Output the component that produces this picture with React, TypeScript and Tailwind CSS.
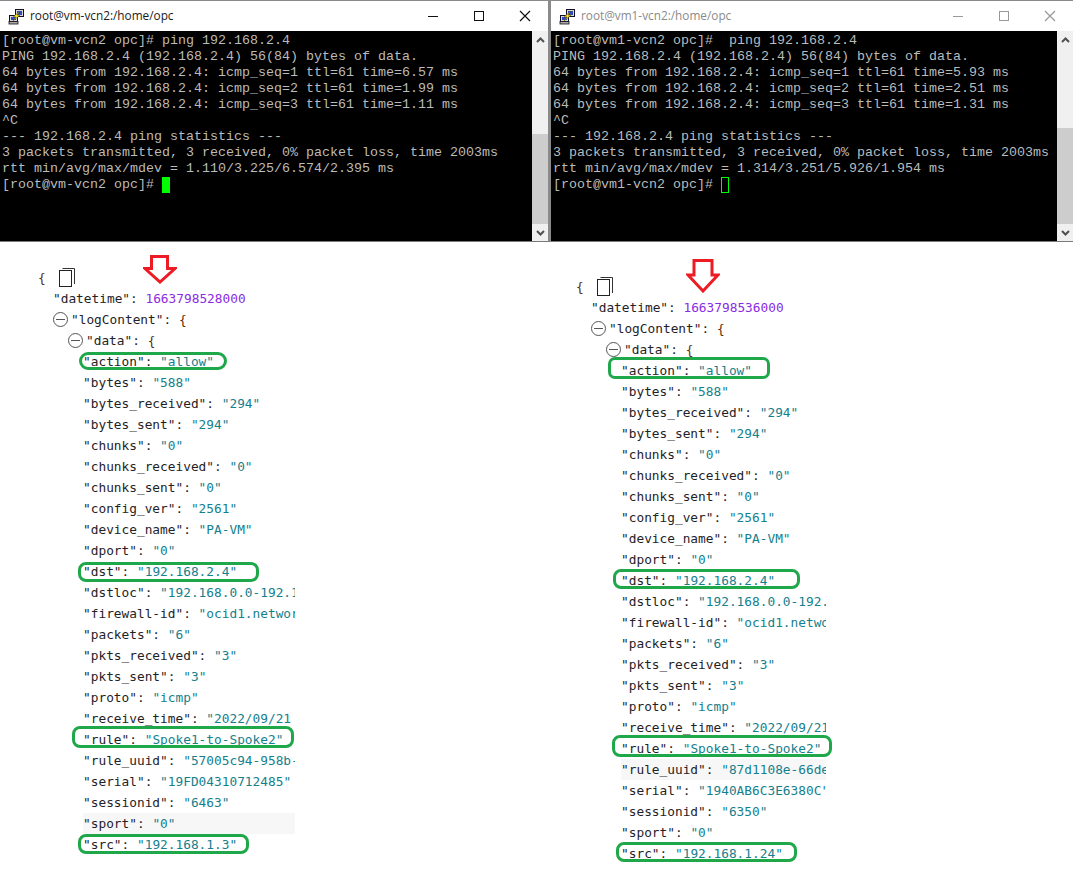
import React from 'react';

type Row = { key: string; value: string; box?: string; shade?: string };

const PuttyIcon: React.FC = () => (
  <svg width="17" height="17" viewBox="0 0 17 17">
    <rect x="7.5" y="1.5" width="8" height="7" fill="#d8d8d8" stroke="#101020" />
    <rect x="9" y="3" width="5" height="4" fill="#3048c0" />
    <rect x="1.5" y="7.5" width="8" height="6" fill="#d8d8d8" stroke="#101020" />
    <rect x="3" y="9" width="5" height="3" fill="#3048c0" />
    <rect x="1" y="13.5" width="9" height="2.5" fill="#a8a8a8" stroke="#101020" strokeWidth="0.8" />
    <path d="M12 3 L5 9 L8 9 L5 13 L12 7 L9 7 Z" fill="#f8e020" stroke="#504800" strokeWidth="0.5" />
  </svg>
);

const Chevron: React.FC<{ down?: boolean }> = ({ down }) => (
  <svg width="9" height="6" viewBox="0 0 9 6" className={down ? 'rotate-180' : ''}>
    <path d="M1 5 L4.5 1.5 L8 5" fill="none" stroke="#505050" strokeWidth="2" />
  </svg>
);

const WindowButtons: React.FC<{ muted?: boolean }> = ({ muted }) => {
  const stroke = muted ? '#999999' : '#111111';
  return (
    <div className="flex items-center">
      <svg width="46" height="30" viewBox="0 0 46 30">
        <path d="M18 15.5 H28" stroke={stroke} />
      </svg>
      <svg width="46" height="30" viewBox="0 0 46 30">
        <rect x="18.5" y="10.5" width="9" height="9" fill="none" stroke={stroke} />
      </svg>
      <svg width="46" height="30" viewBox="0 0 46 30">
        <path d="M18 10 L28 20 M28 10 L18 20" stroke={stroke} strokeWidth="1.2" fill="none" />
      </svg>
    </div>
  );
};

const Terminal: React.FC<{
  title: string;
  lines: string[];
  prompt: string;
  muted?: boolean;
  className: string;
  thumbClass: string;
}> = ({ title, lines, prompt, muted, className, thumbClass }) => (
  <div className={`flex flex-col h-[242px] bg-white border-b border-b-[#7a7a7a] ${className}`}>
    <div className="flex items-center h-[31px] shrink-0 pl-[8px] border-t border-t-[#8a8a8a]">
      <PuttyIcon />
      <span className={`ml-[5px] text-[11.8px] font-['Open_Sans',sans-serif] ${muted ? 'text-[#8a8a8a]' : 'text-[#1a1a1a]'}`}>{title}</span>
      <div className="ml-auto">
        <WindowButtons muted={muted} />
      </div>
    </div>
    <div className="flex flex-1 min-h-0">
      <div className="flex-1 bg-black text-[#bbbbbb] pl-[2px] pt-[2px] text-[13.33px] leading-[16px] whitespace-pre font-['Liberation_Mono',monospace]">
        {lines.map((line, i) => (
          <div key={i}>{line}</div>
        ))}
        <div className="flex items-start">
          <span>{prompt}</span>
          {muted ? (
            <span className="inline-block w-[8px] h-[16px] border border-[#00ff00]" />
          ) : (
            <span className="inline-block w-[8px] h-[16px] bg-[#00ff00]" />
          )}
        </div>
      </div>
      <div className="w-[16px] shrink-0 flex flex-col bg-[#f0f0f0]">
        <div className="h-[17px] flex items-center justify-center">
          <Chevron />
        </div>
        <div className="flex-1 flex flex-col justify-end">
          <div className={`bg-[#cdcdcd] ${thumbClass}`} />
        </div>
        <div className="h-[17px] flex items-center justify-center">
          <Chevron down />
        </div>
      </div>
    </div>
  </div>
);

const RedArrow: React.FC<{ className: string; w: number; h: number; d: string }> = ({ className, w, h, d }) => (
  <svg width={w} height={h} viewBox={`0 0 ${w} ${h}`} className={className}>
    <path d={d} fill="none" stroke="#ed1c24" strokeWidth="3" />
  </svg>
);

const CollapseDot: React.FC = () => (
  <span className="flex items-center justify-center w-[15px] h-[15px] rounded-full border border-[#555555] mr-[3px] shrink-0">
    <span className="w-[9px] h-px bg-[#555555]" />
  </span>
);

const CopyIcon: React.FC = () => (
  <svg width="16" height="20" viewBox="0 0 16 20" className="ml-[13px]">
    <path d="M3.5 0.5 H15.5 V16" fill="none" stroke="#333333" />
    <rect x="0.5" y="2.5" width="12" height="16" fill="white" stroke="#222222" />
  </svg>
);

const JsonRow: React.FC<{ row: Row; clip: string }> = ({ row, clip }) => (
  <div className="relative h-[21px]">
    <div className={`ml-[45px] h-[21px] overflow-hidden whitespace-pre ${clip} ${row.shade || ''}`}>
      <span className="text-[#1f2328]">"{row.key}": </span>
      <span className="text-[#15808d]">"{row.value}"</span>
    </div>
    {row.box && <span className={`absolute border-[3px] border-[#1fa84a] ${row.box}`} />}
  </div>
);

const JsonPanel: React.FC<{
  stamp: string;
  rows: Row[];
  clip: string;
}> = ({ stamp, rows, clip }) => (
  <div className="font-['DejaVu_Sans_Mono',monospace] text-[12.8px] leading-[21px]">
    <div className="flex items-center h-[21px]">
      <span className="text-[#5a2d0c]">{'{'}</span>
      <CopyIcon />
    </div>
    <div className="h-[21px] pl-[15px] whitespace-pre">
      <span className="text-[#1f2328]">"datetime": </span>
      <span className="text-[#8a2be2]">{stamp}</span>
    </div>
    <div className="flex items-center h-[21px] pl-[15px] whitespace-pre">
      <CollapseDot />
      <span className="text-[#1f2328]">"logContent": </span>
      <span className="text-[#5a2d0c]">{'{'}</span>
    </div>
    <div className="flex items-center h-[21px] pl-[30px] whitespace-pre">
      <CollapseDot />
      <span className="text-[#1f2328]">"data": </span>
      <span className="text-[#5a2d0c]">{'{'}</span>
    </div>
    {rows.map((row) => (
      <JsonRow key={row.key} row={row} clip={clip} />
    ))}
  </div>
);

const leftRows: Row[] = [
  { key: 'action', value: 'allow', box: 'left-[41px] top-[1px] w-[148px] h-[18px] rounded-[9px]' },
  { key: 'bytes', value: '588' },
  { key: 'bytes_received', value: '294' },
  { key: 'bytes_sent', value: '294' },
  { key: 'chunks', value: '0' },
  { key: 'chunks_received', value: '0' },
  { key: 'chunks_sent', value: '0' },
  { key: 'config_ver', value: '2561' },
  { key: 'device_name', value: 'PA-VM' },
  { key: 'dport', value: '0' },
  { key: 'dst', value: '192.168.2.4', box: 'left-[40px] top-[1px] w-[181px] h-[20px] rounded-[8px]' },
  { key: 'dstloc', value: '192.168.0.0-192.168' },
  { key: 'firewall-id', value: 'ocid1.network' },
  { key: 'packets', value: '6' },
  { key: 'pkts_received', value: '3' },
  { key: 'pkts_sent', value: '3' },
  { key: 'proto', value: 'icmp' },
  { key: 'receive_time', value: '2022/09/21 ' },
  { key: 'rule', value: 'Spoke1-to-Spoke2', box: 'left-[34px] -top-[3px] w-[222px] h-[22px] rounded-[8px]' },
  { key: 'rule_uuid', value: '57005c94-958b-4' },
  { key: 'serial', value: '19FD04310712485' },
  { key: 'sessionid', value: '6463' },
  { key: 'sport', value: '0', shade: 'bg-[#f7f7f7]' },
  { key: 'src', value: '192.168.1.3', box: 'left-[40px] top-0 w-[171px] h-[20px] rounded-[8px]' },
];

const rightRows: Row[] = [
  { key: 'action', value: 'allow', box: 'left-[32px] -top-[3px] w-[162px] h-[22px] rounded-[7px]' },
  { key: 'bytes', value: '588' },
  { key: 'bytes_received', value: '294' },
  { key: 'bytes_sent', value: '294' },
  { key: 'chunks', value: '0' },
  { key: 'chunks_received', value: '0' },
  { key: 'chunks_sent', value: '0' },
  { key: 'config_ver', value: '2561' },
  { key: 'device_name', value: 'PA-VM' },
  { key: 'dport', value: '0' },
  { key: 'dst', value: '192.168.2.4', box: 'left-[37px] -top-[1px] w-[187px] h-[20px] rounded-[8px]' },
  { key: 'dstloc', value: '192.168.0.0-192.1' },
  { key: 'firewall-id', value: 'ocid1.networ' },
  { key: 'packets', value: '6' },
  { key: 'pkts_received', value: '3' },
  { key: 'pkts_sent', value: '3' },
  { key: 'proto', value: 'icmp' },
  { key: 'receive_time', value: '2022/09/21' },
  { key: 'rule', value: 'Spoke1-to-Spoke2', box: 'left-[36px] -top-[3px] w-[220px] h-[22px] rounded-[8px]' },
  { key: 'rule_uuid', value: '87d1108e-66de-4', shade: 'bg-[#f7f7f7]' },
  { key: 'serial', value: '1940AB6C3E6380C' },
  { key: 'sessionid', value: '6350' },
  { key: 'sport', value: '0' },
  { key: 'src', value: '192.168.1.24', box: 'left-[40px] -top-[1px] w-[181px] h-[20px] rounded-[8px]' },
];

const leftLines = [
  '[root@vm-vcn2 opc]# ping 192.168.2.4',
  'PING 192.168.2.4 (192.168.2.4) 56(84) bytes of data.',
  '64 bytes from 192.168.2.4: icmp_seq=1 ttl=61 time=6.57 ms',
  '64 bytes from 192.168.2.4: icmp_seq=2 ttl=61 time=1.99 ms',
  '64 bytes from 192.168.2.4: icmp_seq=3 ttl=61 time=1.11 ms',
  '^C',
  '--- 192.168.2.4 ping statistics ---',
  '3 packets transmitted, 3 received, 0% packet loss, time 2003ms',
  'rtt min/avg/max/mdev = 1.110/3.225/6.574/2.395 ms',
];

const rightLines = [
  '[root@vm1-vcn2 opc]#  ping 192.168.2.4',
  'PING 192.168.2.4 (192.168.2.4) 56(84) bytes of data.',
  '64 bytes from 192.168.2.4: icmp_seq=1 ttl=61 time=5.93 ms',
  '64 bytes from 192.168.2.4: icmp_seq=2 ttl=61 time=2.51 ms',
  '64 bytes from 192.168.2.4: icmp_seq=3 ttl=61 time=1.31 ms',
  '^C',
  '--- 192.168.2.4 ping statistics ---',
  '3 packets transmitted, 3 received, 0% packet loss, time 2003ms',
  'rtt min/avg/max/mdev = 1.314/3.251/5.926/1.954 ms',
];

export default function App() {
  return (
    <div className="w-[1073px] h-[882px] bg-white overflow-hidden">
      <div className="flex">
        <Terminal
          title="root@vm-vcn2:/home/opc"
          lines={leftLines}
          prompt="[root@vm-vcn2 opc]# "
          className="w-[551px] border-r-[3px] border-r-[#8a8a8a]"
          thumbClass="h-[90px]"
        />
        <Terminal
          title="root@vm1-vcn2:/home/opc"
          lines={rightLines}
          prompt="[root@vm1-vcn2 opc]# "
          muted
          className="w-[522px]"
          thumbClass="h-[96px]"
        />
      </div>
      <div className="flex">
        <div className="relative w-[538px] shrink-0 pl-[38px] pt-[25px]">
          <RedArrow
            className="absolute left-[143px] top-[13px]"
            w={34}
            h={29}
            d="M8.5 1.5 H24.5 V13.5 H32 L17 27 L2 13.5 H8.5 Z"
          />
          <JsonPanel stamp="1663798528000" rows={leftRows} clip="w-[212px]" />
        </div>
        <div className="relative flex-1 pl-[38px] pt-[34px]">
          <RedArrow
            className="absolute left-[148px] top-[17px]"
            w={34}
            h={34}
            d="M8 1.5 H26 V16 H32 L17 32 L2 16 H8 Z"
          />
          <JsonPanel stamp="1663798536000" rows={rightRows} clip="w-[205px]" />
        </div>
      </div>
    </div>
  );
}
